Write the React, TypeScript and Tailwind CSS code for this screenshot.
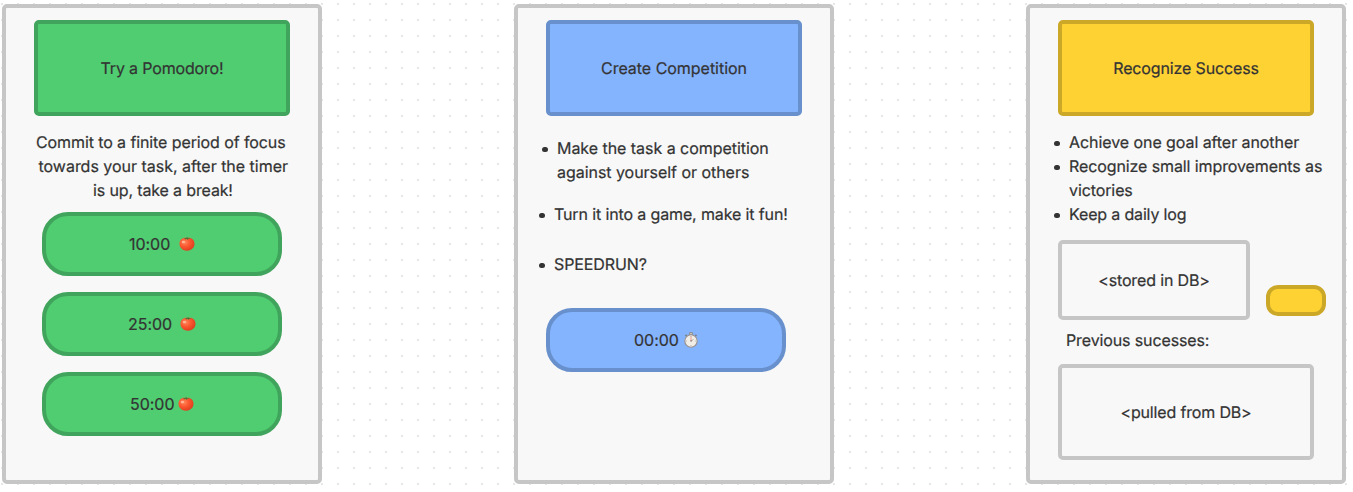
import type { ReactNode } from "react";

function Card({ children }: { children: ReactNode }) {
  return (
    <section className="flex h-[480px] w-[320px] shrink-0 flex-col rounded-[5px] border-4 border-[#c6c6c6] bg-[#f8f8f8] pt-3">
      {children}
    </section>
  );
}

function Title({ className, children }: { className: string; children: ReactNode }) {
  return (
    <h2 className={`ml-7 flex h-24 w-64 shrink-0 items-center justify-center rounded-[5px] border-4 ${className}`}>
      {children}
    </h2>
  );
}

function Tomato({ className }: { className: string }) {
  return (
    <svg viewBox="0 0 16 14" className={`h-[14px] w-4 shrink-0 ${className}`}>
      <defs>
        <radialGradient id="tomato" cx="0.35" cy="0.35" r="0.75">
          <stop offset="0" stopColor="#ff8a5c" />
          <stop offset="0.45" stopColor="#fb5730" />
          <stop offset="1" stopColor="#d93a1c" />
        </radialGradient>
      </defs>
      <path d="M8 1C11.800 0 15.500 2.300 15.500 6.800c0 4.300-3.500 6.900-7.500 6.900S.500 11.200.500 6.800C.500 2.300 4.300 0 8 1Z" fill="url(#tomato)" />
      <path d="M4.500 1.200 7 1 8.200 0 8.800.900 11.500 1.200 9.300 1.900 8.700 2.800 7.700 2 5.500 2.400 6.300 1.700Z" fill="#4c7437" />
      <ellipse cx="4.400" cy="5" rx="1.700" ry="1.200" fill="#ffd0b5" opacity=".7" />
    </svg>
  );
}

function Stopwatch() {
  return (
    <svg viewBox="0 0 16 16" className="ml-[4px] h-4 w-4 shrink-0">
      <path d="M6.600.600h2.800v2.200H6.600Z" fill="#d4cdc3" stroke="#7d7a76" strokeWidth=".7" />
      <path d="m2.500 3.900 1.100-1.100M12.400 2.800l1.100 1.100" stroke="#77767a" strokeWidth="1.400" />
      <circle cx="8" cy="9" r="6.200" fill="#f1ede7" stroke="#96918d" strokeWidth="1.100" />
      <path d="M8 4v1M8 13v1M3 9h1M12 9h1" stroke="#aaa39d" strokeWidth=".7" />
      <path d="M8 9V4.500" stroke="#e1664f" strokeWidth=".6" />
      <path d="m8 9 2.500-1.500" stroke="#85807b" strokeWidth=".6" />
      <circle cx="8" cy="9" r=".7" fill="#77716d" />
    </svg>
  );
}

function Pill({ className, children }: { className: string; children: ReactNode }) {
  return (
    <button className={`flex h-16 w-60 shrink-0 items-center rounded-[26px] border-4 tracking-[-0.03px] ${className}`}>
      {children}
    </button>
  );
}

function Item({ className = "", children }: { className?: string; children: ReactNode }) {
  return (
    <li className={`flex ${className}`}>
      <span className="mt-[10.5px] mr-[9.5px] size-[5.5px] shrink-0 rounded-full bg-[#333]" />
      <span>{children}</span>
    </li>
  );
}

const green = "border-[#40a45c] bg-[#50cd71]";
const blue = "border-[#6890cc] bg-[#85b4ff]";
const yellow = "border-[#cca829] bg-[#ffd233]";

export default function App() {
  return (
    <main className="h-[492px] w-[1353px] overflow-hidden bg-white bg-[conic-gradient(at_2px_2px,transparent_75%,#e6e6e6_0)] bg-[size:16px_16px] bg-[position:1px_3px] font-['Inter',sans-serif] text-base leading-6 tracking-[-0.1px] whitespace-nowrap text-[#333] [text-rendering:geometricPrecision] [-webkit-text-stroke:0.2px_#333]">
      <div className="flex gap-48 pt-1 pl-0.5">
        <Card>
          <Title className={`tracking-[-0.16px] ${green}`}>Try a Pomodoro!</Title>
          <p className="mt-[14px] flex flex-col pl-[30px]">
            <span>Commit to a finite period of focus</span>
            <span className="pl-[2.5px] tracking-[-0.02px]">towards your task, after the timer</span>
            <span className="pl-[57px] tracking-[-0.14px]">is up, take a break!</span>
          </p>
          <div className="mt-[10px] ml-9 flex flex-col gap-4">
            <Pill className={`pl-[83px] ${green}`}>10:00<Tomato className="ml-[9px]" /></Pill>
            <Pill className={`pl-[82px] ${green}`}>25:00<Tomato className="ml-2" /></Pill>
            <Pill className={`pl-[84px] ${green}`}>50:00<Tomato className="ml-1" /></Pill>
          </div>
        </Card>

        <Card>
          <Title className={`tracking-[-0.03px] ${blue}`}>Create Competition</Title>
          <ul className="mt-5 flex flex-col">
            <Item className="pl-6 tracking-[-0.04px]">Make the task a competition<br />against yourself or others</Item>
            <Item className="mt-[18px] pl-[21px] tracking-[-0.13px]">Turn it into a game, make it fun!</Item>
            <Item className="mt-[26px] pl-[21px]">SPEEDRUN?</Item>
          </ul>
          <div className="mt-8 ml-7">
            <Pill className={`pl-[84px] ${blue}`}>00:00<Stopwatch /></Pill>
          </div>
        </Card>

        <Card>
          <Title className={`tracking-[-0.14px] ${yellow}`}>Recognize Success</Title>
          <ul className="mt-[14px] flex flex-col pl-6">
            <Item className="tracking-[-0.07px]">Achieve one goal after another</Item>
            <Item>Recognize small improvements as<br />victories</Item>
            <Item className="tracking-[-0.16px]">Keep a daily log</Item>
          </ul>
          <div className="mt-[14px] ml-7 flex items-end gap-4">
            <div className="flex h-20 w-48 items-center justify-center rounded-[5px] border-4 border-[#c6c6c6] tracking-[-0.14px]">
              &lt;stored in DB&gt;
            </div>
            <button aria-label="Save" className={`mb-1 h-[31px] w-[60px] rounded-[12px] border-4 ${yellow}`} />
          </div>
          <p className="mt-[8px] pl-9 tracking-[-0.12px]">Previous sucesses:</p>
          <div className="mt-[12px] ml-7 flex h-24 w-64 items-center justify-center rounded-[5px] border-4 border-[#c6c6c6] tracking-[-0.16px]">
            &lt;pulled from DB&gt;
          </div>
        </Card>
      </div>
    </main>
  );
}
